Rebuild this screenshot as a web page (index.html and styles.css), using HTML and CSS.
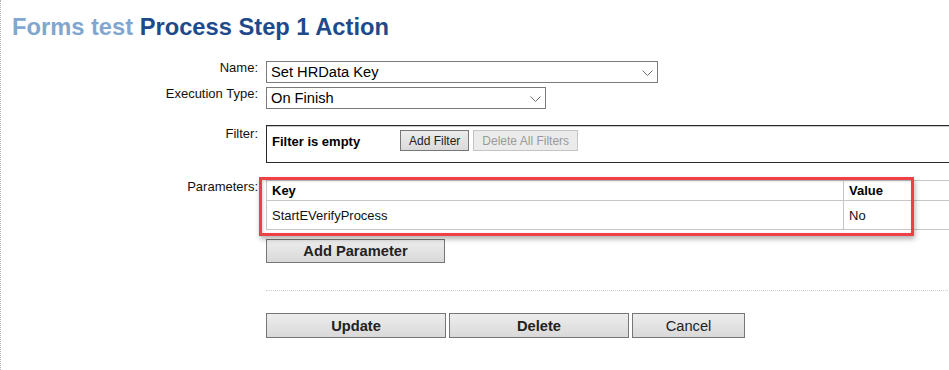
FILE: index.html
```html
<!DOCTYPE html>
<html lang="en">
<head>
    <meta charset="UTF-8">
    <title>Forms test Process Step 1 Action</title>
    <link rel="stylesheet" href="styles.css">
</head>
<body>

<h1><span class="crumb">Forms test</span> Process Step 1 Action</h1>

<div class="form">
    <div class="label">Name:</div>
    <div class="field">
        <div class="select name-select">
            <span>Set HRData Key</span>
            <svg width="11" height="6" viewBox="0 0 11 6"><path d="M0.5 0.5 L5.5 5.5 L10.5 0.5" fill="none" stroke="#6d6d6d" stroke-width="1"/></svg>
        </div>
    </div>

    <div class="label row-exec">Execution Type:</div>
    <div class="field row-exec">
        <div class="select exec-select">
            <span>On Finish</span>
            <svg width="11" height="6" viewBox="0 0 11 6"><path d="M0.5 0.5 L5.5 5.5 L10.5 0.5" fill="none" stroke="#6d6d6d" stroke-width="1"/></svg>
        </div>
    </div>

    <div class="label row-filter filter-label">Filter:</div>
    <div class="field row-filter">
        <div class="filter-box">
            <span class="filter-empty">Filter is empty</span>
            <button class="small-btn">Add Filter</button>
            <button class="small-btn" disabled>Delete All Filters</button>
        </div>
    </div>

    <div class="label row-params">Parameters:</div>
    <div class="field row-params">
        <div class="params">
            <div class="param-table">
                <div class="param-row head">
                    <div class="cell">Key</div>
                    <div class="cell value">Value</div>
                </div>
                <div class="param-row">
                    <div class="cell">StartEVerifyProcess</div>
                    <div class="cell value">No</div>
                </div>
            </div>
            <div class="highlight"></div>
        </div>
        <button class="btn bold add-param">Add Parameter</button>
    </div>

    <div class="field row-sep"><div class="separator"></div></div>

    <div class="field row-actions">
        <div class="actions">
            <button class="btn bold wide">Update</button>
            <button class="btn bold wide">Delete</button>
            <button class="btn cancel">Cancel</button>
        </div>
    </div>
</div>

</body>
</html>
```

FILE: styles.css
```css
html {
    background: #fff;
}
body {
    margin: 0;
    padding: 0 0 0 11px;
    border-left: 1px dotted #b4b4b4;
    min-height: 370px;
    box-sizing: border-box;
    font-family: 'Liberation Sans', Arial, sans-serif;
    color: #111;
    overflow: hidden;
}
h1 {
    margin: 13px 0 0;
    font-size: 23.7px;
    line-height: 28px;
    font-weight: bold;
    color: #1e4a8c;
}
h1 .crumb {
    color: #7fa7cf;
}
.form {
    display: grid;
    grid-template-columns: 246px 720px;
    column-gap: 8px;
    margin-top: 20px;
}
.label {
    grid-column: 1;
    text-align: right;
    font-size: 13px;
    line-height: 13px;
    color: #111;
}
.field {
    grid-column: 2;
}
.row-exec {
    margin-top: 4px;
}
.row-filter {
    margin-top: 16px;
}
.filter-label {
    padding-top: 2px;
}
.row-params {
    margin-top: 17px;
}
.select {
    display: flex;
    align-items: center;
    justify-content: space-between;
    height: 22px;
    box-sizing: border-box;
    border: 1px solid #7a7a7a;
    background: #fff;
    padding: 0 4px 0 4px;
    font-size: 14.67px;
    color: #000;
}
.select svg {
    margin-top: 1px;
}
.name-select {
    width: 392px;
}
.exec-select {
    width: 280px;
}
.filter-box {
    display: flex;
    align-items: flex-start;
    height: 38px;
    box-sizing: border-box;
    border: 1px solid #2a2a2a;
    box-shadow: inset 0 1px 0 #c8c8c8;
    padding: 4px 5px;
}
.filter-empty {
    width: 128px;
    font-size: 13px;
    font-weight: bold;
    color: #000;
    line-height: 21px;
    padding-top: 1px;
}
.small-btn {
    height: 21px;
    margin: 0 4px 0 0;
    padding: 0 8px;
    font-family: inherit;
    font-size: 12px;
    color: #222;
    border: 1px solid #777;
    background: linear-gradient(#ececec, #dadada);
    border-radius: 0;
}
.small-btn:disabled {
    color: #9a9a9a;
    border-color: #c4c4c4;
    background: #ebebeb;
}
.params {
    position: relative;
}
.param-table {
    border-top: 1px solid #c6c6c6;
    border-left: 1px solid #c6c6c6;
    font-size: 13px;
    color: #111;
}
.param-row {
    display: grid;
    grid-template-columns: 576px 1fr;
}
.cell {
    display: flex;
    align-items: center;
    padding-left: 5px;
    height: 29px;
    box-sizing: border-box;
    border-bottom: 1px solid #c6c6c6;
}
.param-row.head .cell {
    height: 20px;
    font-weight: bold;
    color: #000;
}
.cell.value {
    border-left: 1px solid #c6c6c6;
}
.highlight {
    position: absolute;
    left: -7px;
    top: -3px;
    width: 655px;
    height: 59px;
    box-sizing: border-box;
    border: 3px solid #ef3f47;
    box-shadow: 1px 3px 5px rgba(0, 0, 0, 0.3), inset 1px 1px 3px rgba(0, 0, 0, 0.18);
}
.btn {
    display: block;
    height: 24px;
    padding: 0;
    font-family: inherit;
    font-size: 14.67px;
    color: #222;
    border: 1px solid #767676;
    background: linear-gradient(#ededed, #d9d9d9);
    border-radius: 0;
}
.btn.bold {
    font-weight: bold;
}
.add-param {
    width: 179px;
    margin-top: 9px;
}
.row-sep {
    margin-top: 27px;
}
.separator {
    border-top: 1px dotted #cfcfcf;
}
.row-actions {
    margin-top: 22px;
}
.actions {
    display: flex;
    gap: 3px;
}
.actions .btn {
    height: 25px;
}
.wide {
    width: 180px;
}
.cancel {
    width: 113px;
}
```
